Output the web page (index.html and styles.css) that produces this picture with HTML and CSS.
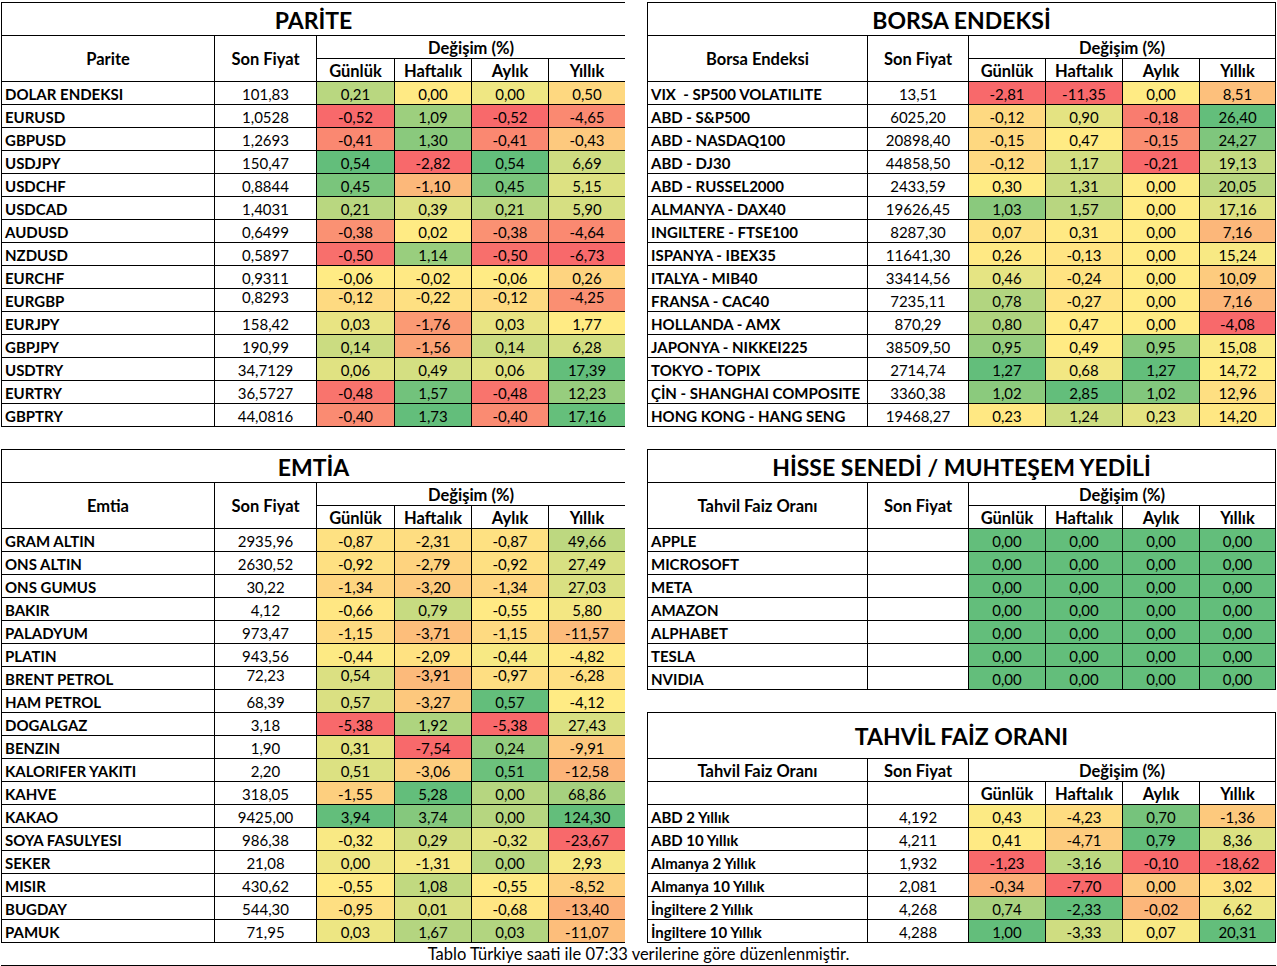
FILE: index.html
```html
<!DOCTYPE html>
<html lang="tr">
<head>
<meta charset="utf-8">
<title>Piyasa Tablosu</title>
<link rel="stylesheet" href="styles.css">
</head>
<body>
<div class="page">
  <div class="cols">
    <div class="col">
      <div class="sheet l">
        <div class="title">PARİTE</div>
        <div class="h span2">Parite</div>
        <div class="h span2">Son Fiyat</div>
        <div class="h span4">Değişim (%)</div>
        <div class="h">Günlük</div><div class="h">Haftalık</div><div class="h">Aylık</div><div class="h">Yıllık</div>
        <div class="row"><div class="n">DOLAR ENDEKSI</div><div>101,83</div><div class="v">0,21</div><div class="v">0,00</div><div class="v">0,00</div><div class="v">0,50</div></div>
        <div class="row"><div class="n">EURUSD</div><div>1,0528</div><div class="v">-0,52</div><div class="v">1,09</div><div class="v">-0,52</div><div class="v">-4,65</div></div>
        <div class="row"><div class="n">GBPUSD</div><div>1,2693</div><div class="v">-0,41</div><div class="v">1,30</div><div class="v">-0,41</div><div class="v">-0,43</div></div>
        <div class="row"><div class="n">USDJPY</div><div>150,47</div><div class="v">0,54</div><div class="v">-2,82</div><div class="v">0,54</div><div class="v">6,69</div></div>
        <div class="row"><div class="n">USDCHF</div><div>0,8844</div><div class="v">0,45</div><div class="v">-1,10</div><div class="v">0,45</div><div class="v">5,15</div></div>
        <div class="row"><div class="n">USDCAD</div><div>1,4031</div><div class="v">0,21</div><div class="v">0,39</div><div class="v">0,21</div><div class="v">5,90</div></div>
        <div class="row"><div class="n">AUDUSD</div><div>0,6499</div><div class="v">-0,38</div><div class="v">0,02</div><div class="v">-0,38</div><div class="v">-4,64</div></div>
        <div class="row"><div class="n">NZDUSD</div><div>0,5897</div><div class="v">-0,50</div><div class="v">1,14</div><div class="v">-0,50</div><div class="v">-6,73</div></div>
        <div class="row"><div class="n">EURCHF</div><div>0,9311</div><div class="v">-0,06</div><div class="v">-0,02</div><div class="v">-0,06</div><div class="v">0,26</div></div>
        <div class="row top"><div class="n">EURGBP</div><div>0,8293</div><div class="v">-0,12</div><div class="v">-0,22</div><div class="v">-0,12</div><div class="v">-4,25</div></div>
        <div class="row"><div class="n">EURJPY</div><div>158,42</div><div class="v">0,03</div><div class="v">-1,76</div><div class="v">0,03</div><div class="v">1,77</div></div>
        <div class="row"><div class="n">GBPJPY</div><div>190,99</div><div class="v">0,14</div><div class="v">-1,56</div><div class="v">0,14</div><div class="v">6,28</div></div>
        <div class="row"><div class="n">USDTRY</div><div>34,7129</div><div class="v">0,06</div><div class="v">0,49</div><div class="v">0,06</div><div class="v">17,39</div></div>
        <div class="row"><div class="n">EURTRY</div><div>36,5727</div><div class="v">-0,48</div><div class="v">1,57</div><div class="v">-0,48</div><div class="v">12,23</div></div>
        <div class="row"><div class="n">GBPTRY</div><div>44,0816</div><div class="v">-0,40</div><div class="v">1,73</div><div class="v">-0,40</div><div class="v">17,16</div></div>
      </div>

      <div class="sheet l">
        <div class="title">EMTİA</div>
        <div class="h span2">Emtia</div>
        <div class="h span2">Son Fiyat</div>
        <div class="h span4">Değişim (%)</div>
        <div class="h">Günlük</div><div class="h">Haftalık</div><div class="h">Aylık</div><div class="h">Yıllık</div>
        <div class="row"><div class="n">GRAM ALTIN</div><div>2935,96</div><div class="v">-0,87</div><div class="v">-2,31</div><div class="v">-0,87</div><div class="v">49,66</div></div>
        <div class="row"><div class="n">ONS ALTIN</div><div>2630,52</div><div class="v">-0,92</div><div class="v">-2,79</div><div class="v">-0,92</div><div class="v">27,49</div></div>
        <div class="row"><div class="n">ONS GUMUS</div><div>30,22</div><div class="v">-1,34</div><div class="v">-3,20</div><div class="v">-1,34</div><div class="v">27,03</div></div>
        <div class="row"><div class="n">BAKIR</div><div>4,12</div><div class="v">-0,66</div><div class="v">0,79</div><div class="v">-0,55</div><div class="v">5,80</div></div>
        <div class="row"><div class="n">PALADYUM</div><div>973,47</div><div class="v">-1,15</div><div class="v">-3,71</div><div class="v">-1,15</div><div class="v">-11,57</div></div>
        <div class="row"><div class="n">PLATIN</div><div>943,56</div><div class="v">-0,44</div><div class="v">-2,09</div><div class="v">-0,44</div><div class="v">-4,82</div></div>
        <div class="row top"><div class="n">BRENT PETROL</div><div>72,23</div><div class="v">0,54</div><div class="v">-3,91</div><div class="v">-0,97</div><div class="v">-6,28</div></div>
        <div class="row"><div class="n">HAM PETROL</div><div>68,39</div><div class="v">0,57</div><div class="v">-3,27</div><div class="v">0,57</div><div class="v">-4,12</div></div>
        <div class="row"><div class="n">DOGALGAZ</div><div>3,18</div><div class="v">-5,38</div><div class="v">1,92</div><div class="v">-5,38</div><div class="v">27,43</div></div>
        <div class="row"><div class="n">BENZIN</div><div>1,90</div><div class="v">0,31</div><div class="v">-7,54</div><div class="v">0,24</div><div class="v">-9,91</div></div>
        <div class="row"><div class="n">KALORIFER YAKITI</div><div>2,20</div><div class="v">0,51</div><div class="v">-3,06</div><div class="v">0,51</div><div class="v">-12,58</div></div>
        <div class="row"><div class="n">KAHVE</div><div>318,05</div><div class="v">-1,55</div><div class="v">5,28</div><div class="v">0,00</div><div class="v">68,86</div></div>
        <div class="row"><div class="n">KAKAO</div><div>9425,00</div><div class="v">3,94</div><div class="v">3,74</div><div class="v">0,00</div><div class="v">124,30</div></div>
        <div class="row"><div class="n">SOYA FASULYESI</div><div>986,38</div><div class="v">-0,32</div><div class="v">0,29</div><div class="v">-0,32</div><div class="v">-23,67</div></div>
        <div class="row"><div class="n">SEKER</div><div>21,08</div><div class="v">0,00</div><div class="v">-1,31</div><div class="v">0,00</div><div class="v">2,93</div></div>
        <div class="row"><div class="n">MISIR</div><div>430,62</div><div class="v">-0,55</div><div class="v">1,08</div><div class="v">-0,55</div><div class="v">-8,52</div></div>
        <div class="row"><div class="n">BUGDAY</div><div>544,30</div><div class="v">-0,95</div><div class="v">0,01</div><div class="v">-0,68</div><div class="v">-13,40</div></div>
        <div class="row"><div class="n">PAMUK</div><div>71,95</div><div class="v">0,03</div><div class="v">1,67</div><div class="v">0,03</div><div class="v">-11,07</div></div>
      </div>
    </div>

    <div class="col">
      <div class="sheet r">
        <div class="title">BORSA ENDEKSİ</div>
        <div class="h span2">Borsa Endeksi</div>
        <div class="h span2">Son Fiyat</div>
        <div class="h span4">Değişim (%)</div>
        <div class="h">Günlük</div><div class="h">Haftalık</div><div class="h">Aylık</div><div class="h">Yıllık</div>
        <div class="row"><div class="n">VIX &nbsp;- SP500 VOLATILITE</div><div>13,51</div><div class="v">-2,81</div><div class="v">-11,35</div><div class="v">0,00</div><div class="v">8,51</div></div>
        <div class="row"><div class="n">ABD - S&amp;P500</div><div>6025,20</div><div class="v">-0,12</div><div class="v">0,90</div><div class="v">-0,18</div><div class="v">26,40</div></div>
        <div class="row"><div class="n">ABD - NASDAQ100</div><div>20898,40</div><div class="v">-0,15</div><div class="v">0,47</div><div class="v">-0,15</div><div class="v">24,27</div></div>
        <div class="row"><div class="n">ABD - DJ30</div><div>44858,50</div><div class="v">-0,12</div><div class="v">1,17</div><div class="v">-0,21</div><div class="v">19,13</div></div>
        <div class="row"><div class="n">ABD - RUSSEL2000</div><div>2433,59</div><div class="v">0,30</div><div class="v">1,31</div><div class="v">0,00</div><div class="v">20,05</div></div>
        <div class="row"><div class="n">ALMANYA - DAX40</div><div>19626,45</div><div class="v">1,03</div><div class="v">1,57</div><div class="v">0,00</div><div class="v">17,16</div></div>
        <div class="row"><div class="n">INGILTERE - FTSE100</div><div>8287,30</div><div class="v">0,07</div><div class="v">0,31</div><div class="v">0,00</div><div class="v">7,16</div></div>
        <div class="row"><div class="n">ISPANYA - IBEX35</div><div>11641,30</div><div class="v">0,26</div><div class="v">-0,13</div><div class="v">0,00</div><div class="v">15,24</div></div>
        <div class="row"><div class="n">ITALYA - MIB40</div><div>33414,56</div><div class="v">0,46</div><div class="v">-0,24</div><div class="v">0,00</div><div class="v">10,09</div></div>
        <div class="row"><div class="n">FRANSA - CAC40</div><div>7235,11</div><div class="v">0,78</div><div class="v">-0,27</div><div class="v">0,00</div><div class="v">7,16</div></div>
        <div class="row"><div class="n">HOLLANDA - AMX</div><div>870,29</div><div class="v">0,80</div><div class="v">0,47</div><div class="v">0,00</div><div class="v">-4,08</div></div>
        <div class="row"><div class="n">JAPONYA - NIKKEI225</div><div>38509,50</div><div class="v">0,95</div><div class="v">0,49</div><div class="v">0,95</div><div class="v">15,08</div></div>
        <div class="row"><div class="n">TOKYO - TOPIX</div><div>2714,74</div><div class="v">1,27</div><div class="v">0,68</div><div class="v">1,27</div><div class="v">14,72</div></div>
        <div class="row"><div class="n">ÇİN - SHANGHAI COMPOSITE</div><div>3360,38</div><div class="v">1,02</div><div class="v">2,85</div><div class="v">1,02</div><div class="v">12,96</div></div>
        <div class="row"><div class="n">HONG KONG - HANG SENG</div><div>19468,27</div><div class="v">0,23</div><div class="v">1,24</div><div class="v">0,23</div><div class="v">14,20</div></div>
      </div>

      <div class="sheet r">
        <div class="title">HİSSE SENEDİ / MUHTEŞEM YEDİLİ</div>
        <div class="h span2">Tahvil Faiz Oranı</div>
        <div class="h span2">Son Fiyat</div>
        <div class="h span4">Değişim (%)</div>
        <div class="h">Günlük</div><div class="h">Haftalık</div><div class="h">Aylık</div><div class="h">Yıllık</div>
        <div class="row"><div class="n">APPLE</div><div></div><div class="v">0,00</div><div class="v">0,00</div><div class="v">0,00</div><div class="v">0,00</div></div>
        <div class="row"><div class="n">MICROSOFT</div><div></div><div class="v">0,00</div><div class="v">0,00</div><div class="v">0,00</div><div class="v">0,00</div></div>
        <div class="row"><div class="n">META</div><div></div><div class="v">0,00</div><div class="v">0,00</div><div class="v">0,00</div><div class="v">0,00</div></div>
        <div class="row"><div class="n">AMAZON</div><div></div><div class="v">0,00</div><div class="v">0,00</div><div class="v">0,00</div><div class="v">0,00</div></div>
        <div class="row"><div class="n">ALPHABET</div><div></div><div class="v">0,00</div><div class="v">0,00</div><div class="v">0,00</div><div class="v">0,00</div></div>
        <div class="row"><div class="n">TESLA</div><div></div><div class="v">0,00</div><div class="v">0,00</div><div class="v">0,00</div><div class="v">0,00</div></div>
        <div class="row"><div class="n">NVIDIA</div><div></div><div class="v">0,00</div><div class="v">0,00</div><div class="v">0,00</div><div class="v">0,00</div></div>
      </div>

      <div class="sheet r tall">
        <div class="title">TAHVİL FAİZ ORANI</div>
        <div class="h">Tahvil Faiz Oranı</div>
        <div class="h">Son Fiyat</div>
        <div class="h span4">Değişim (%)</div>
        <div></div><div></div>
        <div class="h">Günlük</div><div class="h">Haftalık</div><div class="h">Aylık</div><div class="h">Yıllık</div>
        <div class="row"><div class="n">ABD 2 Yıllık</div><div>4,192</div><div class="v">0,43</div><div class="v">-4,23</div><div class="v">0,70</div><div class="v">-1,36</div></div>
        <div class="row"><div class="n">ABD 10 Yıllık</div><div>4,211</div><div class="v">0,41</div><div class="v">-4,71</div><div class="v">0,79</div><div class="v">8,36</div></div>
        <div class="row"><div class="n">Almanya 2 Yıllık</div><div>1,932</div><div class="v">-1,23</div><div class="v">-3,16</div><div class="v">-0,10</div><div class="v">-18,62</div></div>
        <div class="row"><div class="n">Almanya 10 Yıllık</div><div>2,081</div><div class="v">-0,34</div><div class="v">-7,70</div><div class="v">0,00</div><div class="v">3,02</div></div>
        <div class="row"><div class="n">İngiltere 2 Yıllık</div><div>4,268</div><div class="v">0,74</div><div class="v">-2,33</div><div class="v">-0,02</div><div class="v">6,62</div></div>
        <div class="row"><div class="n">İngiltere 10 Yıllık</div><div>4,288</div><div class="v">1,00</div><div class="v">-3,33</div><div class="v">0,07</div><div class="v">20,31</div></div>
      </div>
    </div>
  </div>
  <div class="foot">Tablo Türkiye saati ile 07:33 verilerine göre düzenlenmiştir.</div>
</div>
<script src="script.js"></script>
</body>
</html>
```

FILE: styles.css
```css
* { box-sizing: border-box; }

body {
  margin: 0;
  background: #fff;
  color: #000;
  font-family: Lato, "Noto Sans", sans-serif;
  font-size: 15px;
}

.page {
  width: 1277px;
  padding: 2px 0 0 1px;
}

.cols {
  display: flex;
  gap: 22px;
  align-items: flex-start;
}

.col {
  display: flex;
  flex-direction: column;
  gap: 22px;
}

.sheet {
  display: grid;
  gap: 1px;
  padding: 1px;
  background: #000;
  grid-template-rows: 32px;
  grid-auto-rows: 22px;
}

.sheet.tall { grid-template-rows: 45px; }

.sheet.l {
  width: 624px;
  grid-template-columns: 212px 101px 77px 76px 76px 76px;
}

.sheet.r {
  width: 629px;
  grid-template-columns: 219px 100px 76px 76px 76px 75px;
}

.row { display: contents; }

.sheet > div:not(.row),
.row > div {
  background: #fff;
  display: flex;
  align-items: center;
  justify-content: center;
  white-space: nowrap;
  line-height: 16px;
  padding-top: 1px;
}

.sheet > .title {
  grid-column: 1 / -1;
  font-size: 23px;
  font-weight: 700;
  line-height: 26px;
}

.sheet > .h {
  font-weight: 700;
  font-size: 16.5px;
}

.span2 { grid-row: span 2; }
.sheet > .span4 { grid-column: span 4; }

.row > .n {
  justify-content: flex-start;
  padding-left: 3px;
  font-weight: 700;
}

.row.top > div:not(.n) {
  align-items: flex-start;
  padding-top: 0;
}

.foot {
  width: 1275px;
  height: 23px;
  border-bottom: 1px solid #000;
  text-align: center;
  font-size: 16.5px;
  line-height: 23px;
}
```

FILE: script.js
```js
(function () {
  var RED = [248, 105, 107], YEL = [255, 235, 132], GRN = [99, 190, 123];
  function mix(a, b, t) {
    return 'rgb(' + a.map(function (x, i) { return Math.round(x + (b[i] - x) * t); }).join(',') + ')';
  }
  document.querySelectorAll('.sheet').forEach(function (sheet) {
    var rows = sheet.querySelectorAll('.row');
    for (var c = 0; c < 4; c++) {
      var cells = [], vals = [];
      rows.forEach(function (r) {
        var el = r.querySelectorAll('.v')[c];
        if (el) { cells.push(el); vals.push(parseFloat(el.textContent.replace(',', '.'))); }
      });
      if (!vals.length) continue;
      var s = vals.slice().sort(function (a, b) { return a - b; });
      var n = s.length, p = (n - 1) / 2, lo = Math.floor(p), hi = Math.ceil(p);
      var mid = s[lo] + (s[hi] - s[lo]) * (p - lo);
      var mn = s[0], mx = s[n - 1];
      cells.forEach(function (el, i) {
        var v = vals[i], col;
        if (mx === mn) col = mix(GRN, GRN, 0);
        else if (v <= mid) col = mix(RED, YEL, mid === mn ? 1 : (v - mn) / (mid - mn));
        else col = mix(YEL, GRN, (v - mid) / (mx - mid));
        el.style.background = col;
      });
    }
  });
})();
```
